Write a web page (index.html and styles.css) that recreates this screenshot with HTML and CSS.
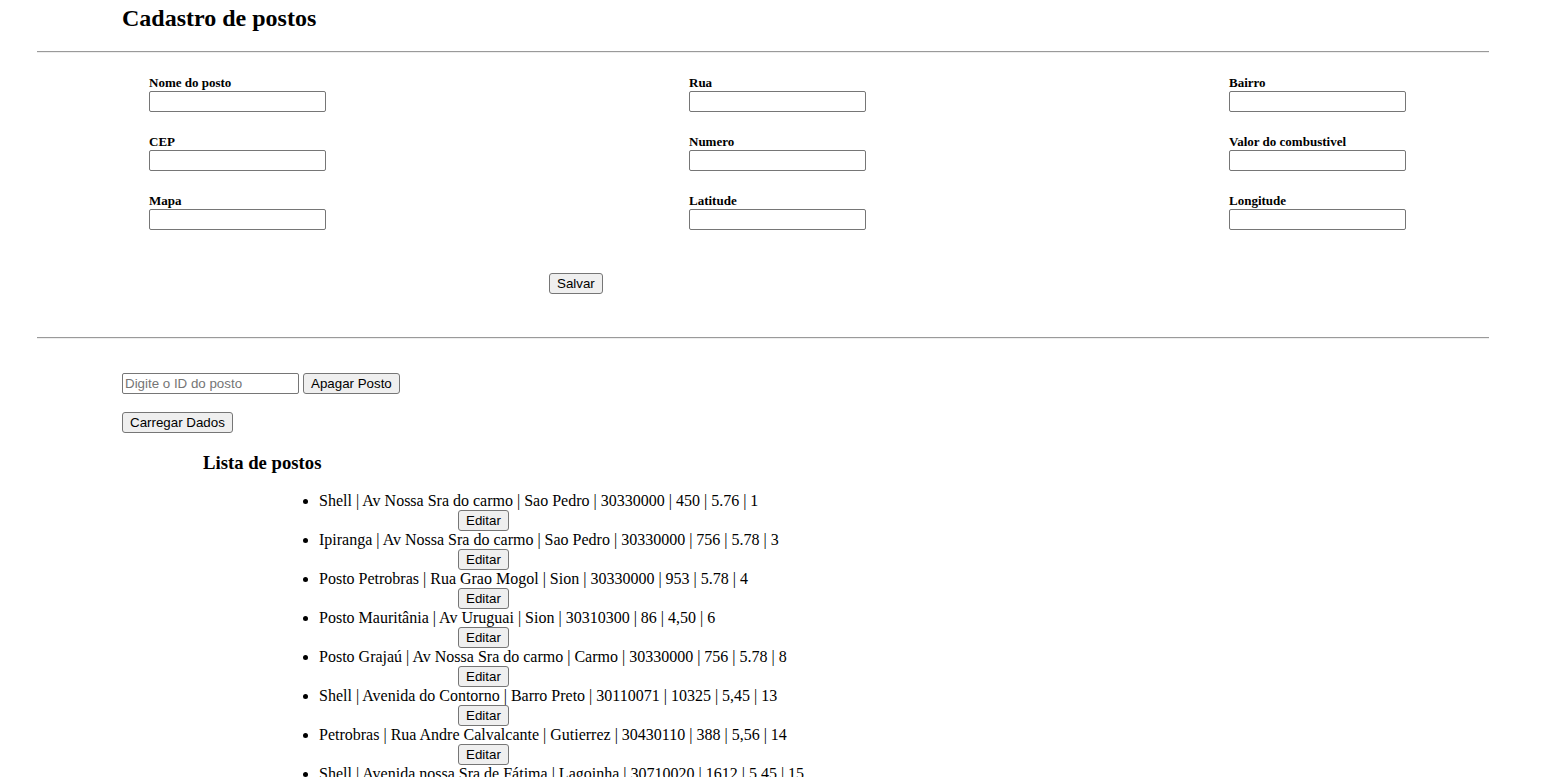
FILE: index.html
```html
<!DOCTYPE html>
<html lang="pt">
<head>
<meta charset="utf-8">
<title>Cadastro de postos</title>
<link rel="stylesheet" href="styles.css">
</head>
<body>
<div class="page">
  <h2 class="title">Cadastro de postos</h2>
  <hr class="rule">
  <form class="form">
    <div class="grid">
      <div class="field"><label>Nome do posto</label><input type="text"></div>
      <div class="field"><label>Rua</label><input type="text"></div>
      <div class="field"><label>Bairro</label><input type="text"></div>
      <div class="field"><label>CEP</label><input type="text"></div>
      <div class="field"><label>Numero</label><input type="text"></div>
      <div class="field"><label>Valor do combustivel</label><input type="text"></div>
      <div class="field"><label>Mapa</label><input type="text"></div>
      <div class="field"><label>Latitude</label><input type="text"></div>
      <div class="field"><label>Longitude</label><input type="text"></div>
    </div>
    <div class="save-row"><button type="button" class="btn">Salvar</button></div>
  </form>
  <hr class="rule rule2">
  <div class="delete-row">
    <input type="text" class="id-input" placeholder="Digite o ID do posto">
    <button type="button" class="btn">Apagar Posto</button>
  </div>
  <div class="load-row"><button type="button" class="btn">Carregar Dados</button></div>
  <h3 class="list-title">Lista de postos</h3>
  <ul class="list">
    <li><div class="item-text">Shell | Av Nossa Sra do carmo | Sao Pedro | 30330000 | 450 | 5.76 | 1</div><div class="item-action"><button type="button" class="btn">Editar</button></div></li>
    <li><div class="item-text">Ipiranga | Av Nossa Sra do carmo | Sao Pedro | 30330000 | 756 | 5.78 | 3</div><div class="item-action"><button type="button" class="btn">Editar</button></div></li>
    <li><div class="item-text">Posto Petrobras | Rua Grao Mogol | Sion | 30330000 | 953 | 5.78 | 4</div><div class="item-action"><button type="button" class="btn">Editar</button></div></li>
    <li><div class="item-text">Posto Mauritânia | Av Uruguai | Sion | 30310300 | 86 | 4,50 | 6</div><div class="item-action"><button type="button" class="btn">Editar</button></div></li>
    <li><div class="item-text">Posto Grajaú | Av Nossa Sra do carmo | Carmo | 30330000 | 756 | 5.78 | 8</div><div class="item-action"><button type="button" class="btn">Editar</button></div></li>
    <li><div class="item-text">Shell | Avenida do Contorno | Barro Preto | 30110071 | 10325 | 5,45 | 13</div><div class="item-action"><button type="button" class="btn">Editar</button></div></li>
    <li><div class="item-text">Petrobras | Rua Andre Calvalcante | Gutierrez | 30430110 | 388 | 5,56 | 14</div><div class="item-action"><button type="button" class="btn">Editar</button></div></li>
    <li><div class="item-text">Shell | Avenida nossa Sra de Fátima | Lagoinha | 30710020 | 1612 | 5,45 | 15</div><div class="item-action"><button type="button" class="btn">Editar</button></div></li>
  </ul>
</div>
</body>
</html>
```
FILE: styles.css
```css
html, body {
  margin: 0;
  padding: 0;
  background: #ffffff;
  color: #000000;
  font-family: "Liberation Serif", "Times New Roman", serif;
  font-size: 16px;
}

.page {
  width: 1452px;
  margin-left: 37px;
}

.title {
  margin: 4px 0 0 85px;
  font-size: 24px;
  font-weight: bold;
  line-height: 28px;
}

.rule {
  margin: 19px 0 0 0;
  border: 0;
  border-top: 1px solid #9a9a9a;
  border-bottom: 1px solid #eeeeee;
  height: 0;
}

.form {
  margin: 0;
  padding: 23px 0 0 112px;
}

.grid {
  display: grid;
  grid-template-columns: 540px 540px 360px;
  row-gap: 23px;
}

.field {
  display: flex;
  flex-direction: column;
  align-items: flex-start;
}

.field label {
  font-size: 13px;
  font-weight: bold;
  line-height: 13px;
  padding-bottom: 2px;
}

input {
  font-family: "Liberation Sans", Arial, sans-serif;
  font-size: 13.33px;
  box-sizing: border-box;
  width: 177px;
  height: 21px;
  margin: 0;
  padding: 1px 2px;
  border: 1px solid #767676;
  border-radius: 2px;
  background: #ffffff;
}

.id-input::placeholder {
  color: #757575;
}

.btn {
  font-family: "Liberation Sans", Arial, sans-serif;
  font-size: 13.33px;
  box-sizing: border-box;
  height: 21px;
  margin: 0;
  padding: 1px 7px;
  line-height: 17px;
  color: #000000;
  background: #efefef;
  border: 1px solid #767676;
  border-radius: 3px;
}

.save-row {
  padding: 43px 0 0 400px;
}

.rule2 {
  margin-top: 43px;
}

.delete-row {
  display: flex;
  gap: 4px;
  padding: 34px 0 0 85px;
}

.load-row {
  padding: 18px 0 0 85px;
}

.list-title {
  margin: 19px 0 0 166px;
  font-size: 18.72px;
  font-weight: bold;
  line-height: 22px;
}

.list {
  margin: 17px 0 0 242px;
  padding-left: 40px;
  list-style: disc;
  line-height: 18px;
}

.item-text {
  height: 19px;
  line-height: 20px;
}

.item-action {
  padding-left: 139px;
  height: 20px;
}
```
